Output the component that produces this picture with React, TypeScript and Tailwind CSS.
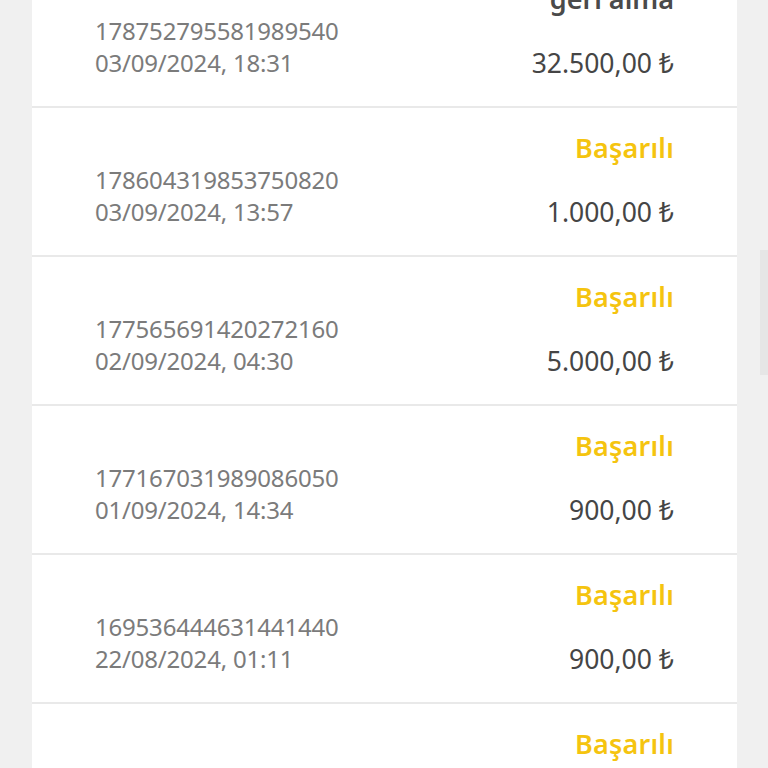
import React from "react";

type Islem = {
  id: string;
  tarih: string;
  durum: string;
  tutar: string;
  iade?: boolean;
};

const islemler: Islem[] = [
  { id: "178752795581989540", tarih: "03/09/2024, 18:31", durum: "Ödeme geri alma", tutar: "32.500,00 ₺", iade: true },
  { id: "178604319853750820", tarih: "03/09/2024, 13:57", durum: "Başarılı", tutar: "1.000,00 ₺" },
  { id: "177565691420272160", tarih: "02/09/2024, 04:30", durum: "Başarılı", tutar: "5.000,00 ₺" },
  { id: "177167031989086050", tarih: "01/09/2024, 14:34", durum: "Başarılı", tutar: "900,00 ₺" },
  { id: "169536444631441440", tarih: "22/08/2024, 01:11", durum: "Başarılı", tutar: "900,00 ₺" },
  { id: "169112730518402210", tarih: "20/08/2024, 22:48", durum: "Başarılı", tutar: "1.500,00 ₺" },
];

function Satir({ islem }: { islem: Islem }) {
  return (
    <li className="flex items-end justify-between border-b-2 border-[#e9e9e9] pl-[63px] pr-[63px] pt-[24px] pb-[27px]">
      <div className="text-[24px] leading-[32px] tracking-[-0.2px] text-[#7b7b7b]">
        <div>{islem.id}</div>
        <div>{islem.tarih}</div>
      </div>
      <div className="flex flex-col items-end text-right">
        {islem.iade ? (
          <div className="w-[140px] text-[27px] font-semibold leading-[32px] text-[#4a4a4a]">
            {islem.durum}
          </div>
        ) : (
          <div className="text-[27px] font-semibold leading-[32px] tracking-[0.2px] text-[#f5c40f]">
            {islem.durum}
          </div>
        )}
        <div className="mt-[32px] text-[26.5px] leading-[32px] text-[#454545]">{islem.tutar}</div>
      </div>
    </li>
  );
}

export default function App() {
  return (
    <div
      className="relative h-[768px] w-[768px] overflow-hidden bg-[#f0f0f0]"
      style={{ fontFamily: '"Noto Sans", "Open Sans", sans-serif' }}
    >
      {/* liste, kaydırılmış görünüm */}
      <ul className="ml-[32px] mt-[-73px] w-[705px] bg-white">
        {islemler.map((i) => (
          <Satir key={i.id} islem={i} />
        ))}
      </ul>

      {/* kaydırma çubuğu */}
      <div className="absolute right-0 top-[250px] h-[125px] w-[8px] bg-[#e6e6e6]" />
    </div>
  );
}
